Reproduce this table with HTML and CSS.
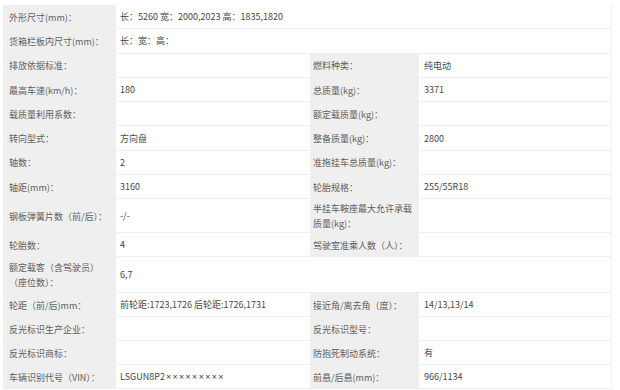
FILE: index.html
```html
<!DOCTYPE html>
<html lang="zh-CN">
<head>
<meta charset="utf-8">
<link rel="stylesheet" href="styles.css">
</head>
<body>
<div class="spec">
  <div class="lb">外形尺寸(mm)：</div>
  <div class="vl span3">长：5260 宽：2000,2023 高：1835,1820</div>

  <div class="lb">货箱栏板内尺寸(mm)：</div>
  <div class="vl span3">长：宽：高：</div>

  <div class="lb">排放依据标准：</div>
  <div class="vl"></div>
  <div class="lb rl">燃料种类：</div>
  <div class="vl rv">纯电动</div>

  <div class="lb">最高车速(km/h)：</div>
  <div class="vl">180</div>
  <div class="lb rl">总质量(kg)：</div>
  <div class="vl rv">3371</div>

  <div class="lb">载质量利用系数：</div>
  <div class="vl"></div>
  <div class="lb rl">额定载质量(kg)：</div>
  <div class="vl rv"></div>

  <div class="lb">转向型式：</div>
  <div class="vl">方向盘</div>
  <div class="lb rl">整备质量(kg)：</div>
  <div class="vl rv">2800</div>

  <div class="lb">轴数：</div>
  <div class="vl">2</div>
  <div class="lb rl">准拖挂车总质量(kg)：</div>
  <div class="vl rv"></div>

  <div class="lb">轴距(mm)：</div>
  <div class="vl">3160</div>
  <div class="lb rl">轮胎规格：</div>
  <div class="vl rv">255/55R18</div>

  <div class="lb">钢板弹簧片数（前/后）：</div>
  <div class="vl">-/-</div>
  <div class="lb rl">半挂车鞍座最大允许承载质量(kg)：</div>
  <div class="vl rv"></div>

  <div class="lb">轮胎数：</div>
  <div class="vl">4</div>
  <div class="lb rl">驾驶室准乘人数（人）：</div>
  <div class="vl rv"></div>

  <div class="lb">额定载客（含驾驶员）（座位数）：</div>
  <div class="vl span3">6,7</div>

  <div class="lb">轮距（前/后)mm：</div>
  <div class="vl">前轮距:1723,1726 后轮距:1726,1731</div>
  <div class="lb rl">接近角/离去角（度）：</div>
  <div class="vl rv">14/13,13/14</div>

  <div class="lb">反光标识生产企业：</div>
  <div class="vl"></div>
  <div class="lb rl">反光标识型号：</div>
  <div class="vl rv"></div>

  <div class="lb">反光标识商标：</div>
  <div class="vl"></div>
  <div class="lb rl">防抱死制动系统：</div>
  <div class="vl rv">有</div>

  <div class="lb">车辆识别代号（VIN）：</div>
  <div class="vl">LSGUN8P2<span class="mask">×××××××××</span></div>
  <div class="lb rl">前悬/后悬(mm)：</div>
  <div class="vl rv">966/1134</div>
</div>
</body>
</html>
```

FILE: styles.css
```css
html, body {
  margin: 0;
  padding: 0;
  background: #ffffff;
}

body {
  width: 620px;
  height: 390px;
  overflow: hidden;
  font-family: "Noto Sans CJK SC", "Noto Sans", sans-serif;
  font-size: 9px;
}

.spec {
  display: grid;
  grid-template-columns: 113px 194px 109px 192px;
  grid-template-rows: repeat(8, 24.3px) 34px 24px 36px repeat(4, 24px);
  margin: 5px 0 0 3px;
  width: 608px;
  border-right: 1px solid #f0f0f0;
}

.lb {
  background: #efefef;
  color: #606060;
  padding: 0 4px 0 6px;
  display: flex;
  align-items: center;
  line-height: 15px;
}

.rl {
  padding-left: 3px;
}

.vl {
  color: #474747;
  padding: 0 4px;
  display: flex;
  align-items: center;
  border-bottom: 1px solid #eeeeee;
  line-height: 15px;
}

.rv {
  padding-left: 5px;
}

.span3 {
  grid-column: span 3;
}

.mask {
  font-family: "Noto Sans", sans-serif;
  margin-left: 1px;
  letter-spacing: 1.4px;
}
```
